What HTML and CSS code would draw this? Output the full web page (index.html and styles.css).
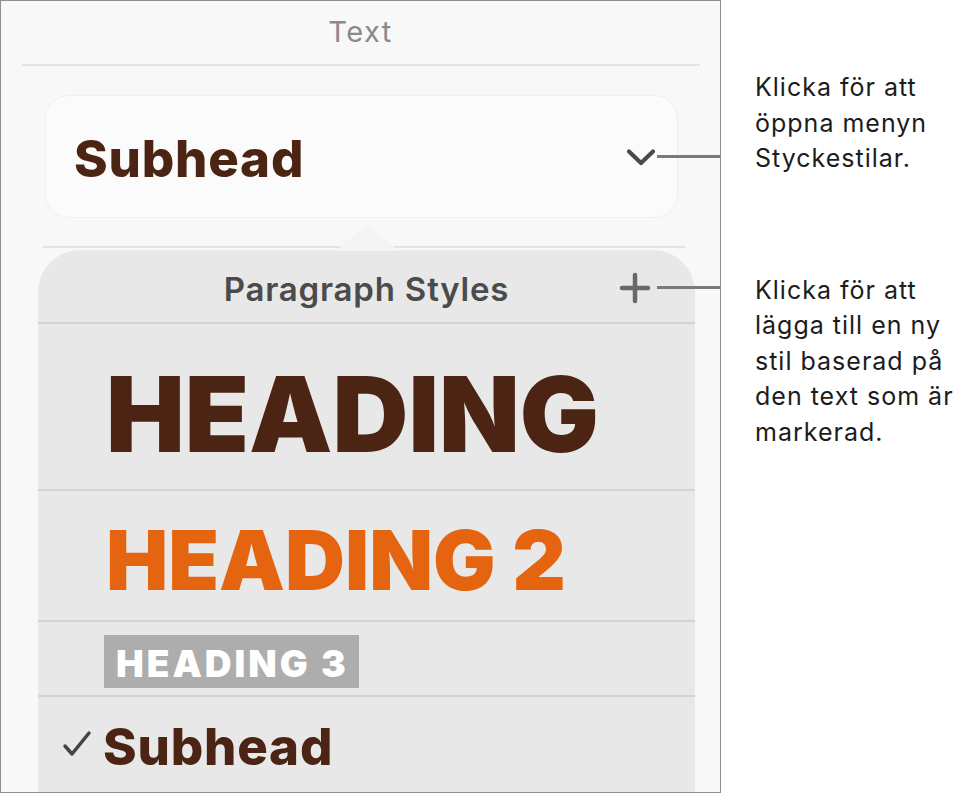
FILE: index.html
```html
<!DOCTYPE html>
<html lang="sv">
<head>
<meta charset="utf-8">
<title>Paragraph Styles</title>
<link rel="stylesheet" href="styles.css">
</head>
<body>
<div class="page">
  <div class="panel">
    <div class="panel-title">Text</div>
    <div class="rule rule-top"></div>
    <div class="style-btn">
      <span class="style-name">Subhead</span>
      <svg class="chevron" width="30" height="19" viewBox="0 0 30 19"><path d="M3 3.5 L15 15 L27 3.5" fill="none" stroke="#4a4a4a" stroke-width="4.2" stroke-linecap="round" stroke-linejoin="round"/></svg>
      <span class="leader leader-1"></span>
    </div>
    <div class="rule rule-mid"></div>
    <div class="popover">
      <span class="arrow"></span>
      <div class="pop-header">
        <span class="pop-title">Paragraph Styles</span>
        <svg class="plus" width="32" height="32" viewBox="0 0 32 32"><path d="M16 3 V29 M3 16 H29" fill="none" stroke="#686868" stroke-width="4.5" stroke-linecap="round"/></svg>
        <span class="leader leader-2"></span>
      </div>
      <div class="row row-h1"><span class="h1">HEADING</span></div>
      <div class="row row-h2"><span class="h2">HEADING 2</span></div>
      <div class="row row-h3"><span class="h3">HEADING 3</span></div>
      <div class="row row-sub">
        <svg class="check" width="30" height="28" viewBox="0 0 30 28"><path d="M3 16 L10 24 L27 3" fill="none" stroke="#444" stroke-width="3.5" stroke-linecap="round" stroke-linejoin="round"/></svg>
        <span class="sub">Subhead</span>
      </div>
    </div>
  </div>
  <div class="notes">
    <p class="note note-1">Klicka för att<br>öppna menyn<br>Styckestilar.</p>
    <p class="note note-2">Klicka för att<br>lägga till en ny<br>stil baserad på<br>den text som är<br>markerad.</p>
  </div>
</div>
</body>
</html>
```
FILE: styles.css
```css
* { box-sizing: border-box; }
html, body { margin: 0; padding: 0; background: #ffffff; }
body { font-family: "Inter", "Liberation Sans", Arial, sans-serif; }

.page {
  display: flex;
  width: 972px;
  height: 793px;
  overflow: hidden;
}

.panel {
  width: 721px;
  height: 793px;
  flex: none;
  border: 1px solid #8e8e8e;
  background: #f8f8f8;
  display: flex;
  flex-direction: column;
  overflow: hidden;
  position: relative;
}

.panel-title {
  height: 63px;
  display: flex;
  align-items: center;
  justify-content: center;
  font-size: 29px;
  letter-spacing: 1.5px;
  color: #8a8a8a;
  padding-bottom: 2px;
}

.rule { height: 2px; background: #e3e3e3; flex: none; }
.rule-top { margin: 0 20px 0 21px; }
.rule-mid { margin: 28px 35px 0 42px; }

.style-btn {
  margin: 29px 42px 0 44px;
  height: 123px;
  border-radius: 24px;
  background: #fbfbfb;
  border: 1px solid #f0f0f0;
  display: flex;
  align-items: center;
  justify-content: space-between;
  padding: 0 21px 0 28px;
  position: relative;
}

.style-name {
  font-weight: 800;
  font-size: 51px;
  letter-spacing: 0.8px;
  color: #4b2413;
  padding-top: 3px;
}

.chevron { display: block; margin-top: 1px; }

.leader {
  position: absolute;
  height: 3px;
  background: #7a7a7a;
}
.leader-1 { left: 611px; top: 59px; width: 89px; }

.popover {
  margin: 2px 25px 0 37px;
  flex: 1;
  background: #e8e8e8;
  border-radius: 42px 42px 0 0;
  position: relative;
  display: flex;
  flex-direction: column;
}

.arrow {
  position: absolute;
  top: -26px;
  left: 297px;
  width: 0;
  height: 0;
  border-left: 32px solid transparent;
  border-right: 32px solid transparent;
  border-bottom: 27px solid #f4f4f3;
}

.pop-header {
  height: 74px;
  display: flex;
  align-items: center;
  justify-content: center;
  position: relative;
  border-bottom: 2px solid #d3d3d3;
}

.pop-title {
  font-weight: 600;
  font-size: 33px;
  letter-spacing: 0.8px;
  color: #4b4b4b;
  margin-top: 6px;
}

.plus {
  position: absolute;
  left: 581px;
  top: 22px;
}
.leader-2 { left: 619px; top: 36px; width: 90px; }

.row {
  border-bottom: 2px solid #d3d3d3;
  display: flex;
  align-items: center;
  padding-left: 68px;
}

.row-h1 { height: 167px; padding-top: 14px; }
.row-h2 { height: 131px; padding-top: 10px; }
.row-h3 { height: 75px; padding-left: 66px; padding-top: 5px; }
.row-sub { flex: 1; border-bottom: none; padding-left: 24px; align-items: flex-start; padding-top: 24px; }

.h1 {
  font-weight: 900;
  font-size: 105px;
  color: #4b2413;
  line-height: 1;
}

.h2 {
  font-weight: 900;
  font-size: 83px;
  color: #e5640f;
  line-height: 1;
}

.h3 {
  font-weight: 900;
  font-size: 37px;
  color: #ffffff;
  background: #adadad;
  line-height: 53px;
  height: 53px;
  padding: 2px 10px 0 12px;
  letter-spacing: 3px;
}

.check { display: block; margin-top: 9px; margin-right: 11px; }

.sub {
  font-weight: 800;
  font-size: 51px;
  letter-spacing: 0.8px;
  color: #4b2413;
  line-height: 1;
}

.notes {
  flex: 1;
  padding-left: 34px;
  font-size: 25px;
  letter-spacing: 1px;
  line-height: 35.5px;
  color: #1c1c1c;
}

.note { margin: 0; }
.note-1 { margin-top: 70px; }
.note-2 { margin-top: 96px; }
```
